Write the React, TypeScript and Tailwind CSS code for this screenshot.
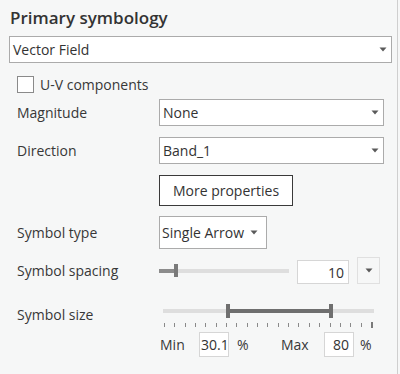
import React from "react";

const font = { fontFamily: '"Open Sans", "Noto Sans", sans-serif' };

function Caret({ className = "" }: { className?: string }) {
  return (
    <svg width="8" height="5" viewBox="0 0 8 5" className={className}>
      <path d="M0.5 0.5 L7.5 0.5 L4 4.5 Z" fill="#5a5a5a" />
    </svg>
  );
}

function Select({ text, className }: { text: string; className: string }) {
  return (
    <div
      className={`flex items-center justify-between bg-white border border-[#ababab] pl-[3px] pr-[4px] ${className}`}
    >
      <span className="text-[14px] text-[#333]">{text}</span>
      <Caret />
    </div>
  );
}

export default function App() {
  const ticks = Array.from({ length: 21 }, (_, i) => i);
  return (
    <div className="w-[400px] h-[374px] bg-[#f6f7f7] text-[#383838]" style={font}>
      <div className="w-[398px] h-[374px] border-r border-[#cfcfcf] flex flex-col">
        <div className="h-[36px] pl-[10px] pt-[5px] text-[17px] font-semibold text-[#333] leading-[26px]">
          Primary symbology
        </div>
        <Select text="Vector Field" className="ml-[9px] w-[383px] h-[27px]" />

        <div className="mt-[13px] ml-[17px] h-[17px] flex items-center">
          <div className="w-[17px] h-[17px] bg-white border border-[#8a8a8a]" />
          <span className="ml-[6px] text-[14px] leading-[17px]">U-V components</span>
        </div>

        <div className="mt-[6px] h-[27px] flex items-center">
          <span className="w-[159px] pl-[17px] text-[14px]">Magnitude</span>
          <Select text="None" className="w-[225px] h-[27px]" />
        </div>

        <div className="mt-[11px] h-[27px] flex items-center">
          <span className="w-[159px] pl-[17px] text-[14px]">Direction</span>
          <Select text="Band_1" className="w-[225px] h-[27px]" />
        </div>

        <div className="mt-[11px] ml-[159px] w-[134px] h-[31px] border border-[#3a3a3a] bg-white flex items-center justify-center text-[14px] text-[#333]">
          More properties
        </div>

        <div className="mt-[10px] h-[33px] flex items-center">
          <span className="w-[159px] pl-[17px] text-[14px]">Symbol type</span>
          <div className="w-[108px] h-[33px] bg-white border border-[#ababab] flex items-center pl-[2px] gap-[6px]">
            <span className="text-[14px] text-[#333]">Single Arrow</span>
            <Caret />
          </div>
        </div>

        <div className="mt-[8px] h-[27px] flex items-center">
          <span className="w-[159px] pl-[17px] text-[14px]">Symbol spacing</span>
          <div className="relative w-[130px] h-[14px] flex items-center">
            <div className="w-[16px] h-[4px] bg-[#8c8c8c]" />
            <div className="flex-1 h-[4px] bg-[#dedede]" />
            <div className="absolute left-[15px] top-[0px] w-[4px] h-[13px] bg-[#7a7a7a]" />
          </div>
          <div className="ml-[8px] mt-[3px] w-[52px] h-[24px] bg-white border border-[#d6d6d6] flex items-center justify-end pr-[4px] text-[14px] text-[#333]">
            10
          </div>
          <div className="ml-[8px] w-[23px] h-[27px] border border-[#e0e0e0] bg-[#f6f7f7] flex items-center justify-center">
            <Caret />
          </div>
        </div>

        <div className="mt-[12px] flex">
          <span className="w-[159px] pl-[17px] text-[14px] leading-[20px] pt-[9px]">Symbol size</span>
          <div className="flex flex-col">
            <div className="mt-[8px] ml-[4px] relative w-[211px] h-[14px] flex items-center">
              <div className="w-[64px] h-[4px] bg-[#dedede]" />
              <div className="w-[104px] h-[4px] bg-[#6f6f6f]" />
              <div className="flex-1 h-[4px] bg-[#dedede]" />
              <div className="absolute left-[63px] top-0 w-[4px] h-[14px] bg-[#6f6f6f]" />
              <div className="absolute left-[166px] top-0 w-[4px] h-[14px] bg-[#6f6f6f]" />
            </div>
            <div className="mt-[4px] ml-[5px] w-[209px] h-[6px] flex justify-between items-start">
              {ticks.map((i) =>
                i === 20 ? (
                  <div key={i} className="w-[2px] h-[6px] bg-[#7a7a7a]" />
                ) : (
                  <div key={i} className="mt-[1px] w-[1px] h-[4px] bg-[#8a8a8a]" />
                )
              )}
            </div>
            <div className="mt-[4px] h-[25px] flex items-center text-[14px]">
              <span className="ml-[1px] w-[39px]">Min</span>
              <div className="w-[30px] h-[25px] bg-white border border-[#d6d6d6] overflow-hidden whitespace-nowrap flex items-center pl-[1px] text-[#333]">
                30.1
              </div>
              <span className="ml-[8px] w-[44px]">%</span>
              <span className="w-[43px]">Max</span>
              <div className="w-[30px] h-[25px] bg-white border border-[#d6d6d6] flex items-center justify-end pr-[4px] text-[#333]">
                80
              </div>
              <span className="ml-[6px]">%</span>
            </div>
          </div>
        </div>
      </div>
    </div>
  );
}
